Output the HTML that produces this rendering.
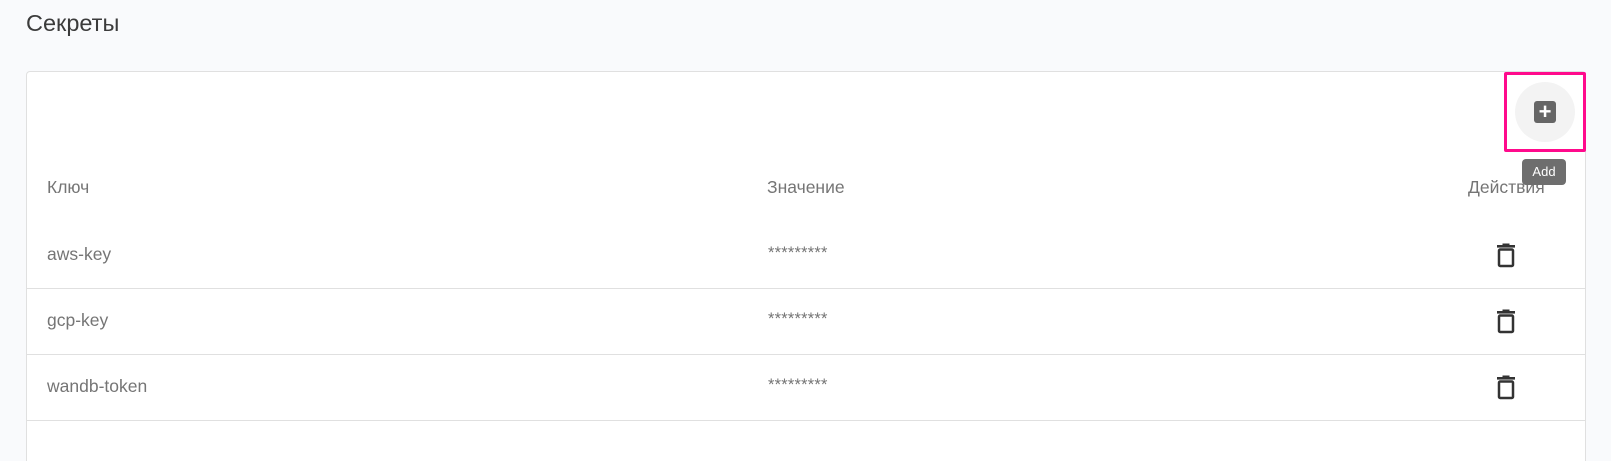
<!DOCTYPE html>
<html><head><meta charset="utf-8"><style>
html,body{margin:0;padding:0;width:1611px;height:460px;overflow:hidden;background:#f9fafc;font-family:"Liberation Sans",sans-serif;}
.title{position:absolute;left:26px;top:10px;font-size:23.5px;color:#3b3b3b;}
.card{position:absolute;left:26px;top:71px;width:1558px;height:389px;background:#fff;border:1px solid #e0e0e0;border-bottom:none;border-radius:4px 4px 0 0;}
.t{position:absolute;font-size:17.5px;color:#757575;line-height:20px;}
.sep{position:absolute;left:27px;width:1558px;height:1px;background:#e0e0e0;}
.stars{position:absolute;left:768px;font-size:16.5px;color:#757575;letter-spacing:0.2px;}
.trash{position:absolute;left:1495px;}
.pink{position:absolute;left:1504px;top:72px;width:76px;height:74px;border:3px solid #ff0a8c;border-radius:2px;}
.circ{position:absolute;left:1515px;top:82px;width:60px;height:60px;border-radius:50%;background:#f3f3f3;}
.plus{position:absolute;left:1534px;top:101px;width:22px;height:22px;background:#666;border-radius:3px;color:#fff;font-size:22px;line-height:22px;text-align:center;font-weight:bold;}
.tip{position:absolute;left:1522px;top:159px;width:44px;height:26px;background:#6e6e6e;border-radius:4px;color:#fff;font-size:13px;line-height:26px;text-align:center;}
</style></head><body>
<div class="title">Секреты</div>
<div class="card"></div>
<div class="t" style="left:47px;top:177px">Ключ</div>
<div class="t" style="left:767px;top:177px">Значение</div>
<div class="t" style="left:1468px;top:177px">Действия</div>
<div class="t" style="left:47px;top:244px">aws-key</div>
<div class="t" style="left:47px;top:310px">gcp-key</div>
<div class="t" style="left:47px;top:376px">wandb-token</div>
<div class="stars" style="top:244px">*********</div>
<div class="stars" style="top:310px">*********</div>
<div class="stars" style="top:376px">*********</div>
<div class="sep" style="top:288px"></div>
<div class="sep" style="top:354px"></div>
<div class="sep" style="top:420px"></div>
<svg class="trash" style="top:243px" width="22" height="25" viewBox="0 0 22 25"><rect x="2" y="2" width="18" height="2.6" fill="#333"/><rect x="7.5" y="0.5" width="7" height="2" fill="#333"/><rect x="4" y="6.5" width="14" height="16.5" fill="none" stroke="#333" stroke-width="2.5" rx="1.2"/></svg>
<svg class="trash" style="top:309px" width="22" height="25" viewBox="0 0 22 25"><rect x="2" y="2" width="18" height="2.6" fill="#333"/><rect x="7.5" y="0.5" width="7" height="2" fill="#333"/><rect x="4" y="6.5" width="14" height="16.5" fill="none" stroke="#333" stroke-width="2.5" rx="1.2"/></svg>
<svg class="trash" style="top:375px" width="22" height="25" viewBox="0 0 22 25"><rect x="2" y="2" width="18" height="2.6" fill="#333"/><rect x="7.5" y="0.5" width="7" height="2" fill="#333"/><rect x="4" y="6.5" width="14" height="16.5" fill="none" stroke="#333" stroke-width="2.5" rx="1.2"/></svg>
<div class="circ"></div>
<div class="plus">+</div>
<div class="pink"></div>
<div class="tip">Add</div>
</body></html>
